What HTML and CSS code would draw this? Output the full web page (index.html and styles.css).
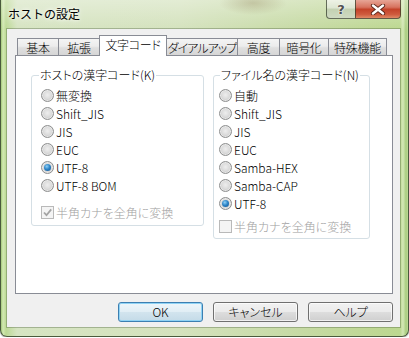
FILE: index.html
```html
<!DOCTYPE html>
<html lang="ja">
<head>
<meta charset="utf-8">
<title>ホストの設定</title>
<link rel="stylesheet" href="styles.css">
</head>
<body>
<div class="window">
  <div class="titlebar">
    <span class="title">ホストの設定</span>
    <div class="caption-btns">
      <span class="cap cap-help">?</span>
      <span class="cap cap-close">
        <svg width="16" height="11" viewBox="0 0 16 11">
          <path d="M3 1.5 L13 9.5 M13 1.5 L3 9.5" stroke="#5a2418" stroke-width="4.2" stroke-linecap="round"/>
          <path d="M3 1.5 L13 9.5 M13 1.5 L3 9.5" stroke="#ffffff" stroke-width="2.4" stroke-linecap="round"/>
        </svg>
      </span>
    </div>
  </div>
  <div class="client">
    <div class="tabs">
      <span class="tab t1">基本</span>
      <span class="tab t2">拡張</span>
      <span class="tab t3 selected">文字コード</span>
      <span class="tab t4">ダイアルアップ</span>
      <span class="tab t5">高度</span>
      <span class="tab t6">暗号化</span>
      <span class="tab t7">特殊機能</span>
    </div>
    <div class="panel">
      <div class="group group-host">
        <div class="group-title">ホストの漢字コード(K)</div>
        <div class="opts">
          <div class="opt"><span class="radio"></span>無変換</div>
          <div class="opt"><span class="radio"></span>Shift_JIS</div>
          <div class="opt"><span class="radio"></span>JIS</div>
          <div class="opt"><span class="radio"></span>EUC</div>
          <div class="opt"><span class="radio on"><span class="dot"></span></span>UTF-8</div>
          <div class="opt"><span class="radio"></span>UTF-8 BOM</div>
        </div>
        <div class="opt check disabled">
          <span class="box">
            <svg width="11" height="11" viewBox="0 0 11 11"><path d="M2 5.5 L4.5 8.2 L9.2 2.4" fill="none" stroke="#a4a4a4" stroke-width="1.8"/></svg>
          </span>半角カナを全角に変換
        </div>
      </div>
      <div class="group group-file">
        <div class="group-title">ファイル名の漢字コード(N)</div>
        <div class="opts">
          <div class="opt"><span class="radio"></span>自動</div>
          <div class="opt"><span class="radio"></span>Shift_JIS</div>
          <div class="opt"><span class="radio"></span>JIS</div>
          <div class="opt"><span class="radio"></span>EUC</div>
          <div class="opt"><span class="radio"></span>Samba-HEX</div>
          <div class="opt"><span class="radio"></span>Samba-CAP</div>
          <div class="opt"><span class="radio on"><span class="dot"></span></span>UTF-8</div>
        </div>
        <div class="opt check disabled">
          <span class="box"></span>半角カナを全角に変換
        </div>
      </div>
    </div>
    <div class="buttons">
      <span class="btn default">OK</span>
      <span class="btn">キャンセル</span>
      <span class="btn">ヘルプ</span>
    </div>
  </div>
</div>
</body>
</html>
```
FILE: styles.css
```css
html, body {
  margin: 0;
  padding: 0;
  background: #ffffff;
}

body {
  font-family: "Noto Sans CJK JP", "Noto Sans", sans-serif;
  font-size: 12px;
  font-weight: 300;
  color: #000;
}

.window {
  width: 409px;
  height: 337px;
  box-sizing: border-box;
  border: 1px solid #4a5a3c;
  border-top: none;
  border-radius: 0 0 7px 7px;
  padding: 0 8px 0 6px;
  display: flex;
  flex-direction: column;
  background:
    radial-gradient(ellipse 34px 12px at 252px 3px, rgba(150, 135, 95, 0.35), rgba(150, 135, 95, 0)),
    linear-gradient(to bottom, rgba(255, 255, 255, 0.35), rgba(255, 255, 255, 0) 30px),
    linear-gradient(to right, #a3c879 0, #d3e9b3 2px, #bcd995 5px, #d6e4c2 16px, #d4e2bd 180px, #c6daa4 300px, #bed793 380px, #bcd890 399px, #d4e8b6 402px, #a8cc7e 405px, #c9e2a4 408px);
  box-shadow: 0 1px 1px rgba(0, 0, 0, 0.35);
}

.titlebar {
  height: 29px;
  margin: 0 -8px 0 -6px;
  padding: 0 7px 0 7px;
  display: flex;
  align-items: flex-start;
  flex-shrink: 0;
}

.title {
  margin-top: 6px;
  font-size: 12px;
  font-weight: 400;
  line-height: 16px;
  color: #000;
  text-shadow: 0 0 6px rgba(255, 255, 255, 0.9), 0 0 3px rgba(255, 255, 255, 0.9);
}

.caption-btns {
  margin-left: auto;
  display: flex;
}

.cap {
  height: 19px;
  box-sizing: border-box;
  display: flex;
  align-items: center;
  justify-content: center;
  border: 1px solid rgba(55, 65, 45, 0.75);
  border-top: none;
}

.cap-help {
  width: 29px;
  border-right: none;
  border-radius: 0 0 0 4px;
  background: linear-gradient(to bottom, #eef2e6 0%, #dde6d2 45%, #c3d1b2 50%, #cfdac2 100%);
  font-family: "DejaVu Sans", sans-serif;
  font-weight: bold;
  font-size: 13px;
  color: #505050;
  text-shadow: 0 0 1px #fff, 0 0 2px #fff;
  line-height: 13px;
}

.cap-close {
  width: 46px;
  border-radius: 0 0 4px 0;
  background: linear-gradient(to bottom, #e7a596 0%, #d7735f 40%, #c4432a 52%, #cf5b3e 80%, #e08a66 100%);
}

.client {
  height: 298px;
  flex-shrink: 0;
  background: #f0f0f0;
  box-shadow: 0 0 0 1px rgba(70, 90, 55, 0.35);
  display: flex;
  flex-direction: column;
}

.tabs {
  margin: 6px 0 0 10px;
  height: 20px;
  display: flex;
  align-items: flex-end;
}

.tab {
  box-sizing: border-box;
  height: 17px;
  border: 1px solid #898c95;
  border-bottom: none;
  margin-left: -1px;
  display: flex;
  align-items: center;
  justify-content: center;
  line-height: 14px;
  padding-top: 1px;
  background: linear-gradient(to bottom, #f4f4f4 0%, #ececec 45%, #dfdfdf 55%, #d6d6d6 100%);
  font-feature-settings: "palt";
  letter-spacing: -0.3px;
  white-space: nowrap;
}

.t1 { width: 42px; margin-left: 0; }
.t2 { width: 42px; }
.t3 { width: 68px; }
.t4 { width: 72px; letter-spacing: -1px; }
.t5 { width: 43px; }
.t6 { width: 50px; }
.t7 { width: 59px; }

.tab.selected {
  height: 21px;
  margin-bottom: -1px;
  background: #ffffff;
  position: relative;
  z-index: 1;
  padding-top: 0;
  padding-bottom: 2px;
}

.panel {
  margin-left: 8px;
  width: 378px;
  height: 239px;
  box-sizing: border-box;
  border: 1px solid #898c95;
  background: #ffffff;
  display: flex;
  align-items: flex-start;
  gap: 9px;
  padding: 19px 0 0 15px;
}

.group {
  box-sizing: border-box;
  border: 1px solid #d5dfe5;
  border-radius: 3px;
  flex-shrink: 0;
}

.group-host {
  width: 173px;
  height: 151px;
  padding-left: 9px;
}

.group-file {
  width: 157px;
  height: 164px;
  padding-left: 5px;
}

.group-title {
  width: fit-content;
  height: 14px;
  line-height: 14px;
  margin-top: -8px;
  padding: 0 1px;
  background: #ffffff;
  white-space: nowrap;
  font-feature-settings: "palt";
}

.group-host .group-title { margin-left: -2px; }
.group-file .group-title { margin-left: 1px; }

.opts {
  margin-top: 4px;
  display: flex;
  flex-direction: column;
}

.opt {
  height: 18px;
  display: flex;
  align-items: center;
  white-space: nowrap;
  font-feature-settings: "palt";
}

.radio {
  width: 13px;
  height: 13px;
  box-sizing: border-box;
  border-radius: 50%;
  border: 1px solid #8e8f8f;
  background: radial-gradient(circle at 50% 45%, #eeeeee 0%, #dcdcdc 45%, #c4c4c4 80%, #d8d8d8 100%);
  box-shadow: inset 0 0 0 1px rgba(255, 255, 255, 0.5);
  margin-right: 2px;
  flex-shrink: 0;
  display: flex;
  align-items: center;
  justify-content: center;
}

.radio .dot {
  width: 7px;
  height: 7px;
  border-radius: 50%;
  background: radial-gradient(circle at 40% 35%, #8fd0f6 0%, #2f86c8 45%, #0d4f8e 100%);
}

.check {
  margin-top: 9px;
}

.group-file .check {
  margin-top: 5px;
}

.disabled {
  color: #a0a0a0;
}

.box {
  width: 13px;
  height: 13px;
  box-sizing: border-box;
  border: 1px solid #b9b9b9;
  background: #f4f4f4;
  margin-right: 2px;
  flex-shrink: 0;
  display: flex;
  align-items: center;
  justify-content: center;
}

.buttons {
  margin-top: 8px;
  height: 20px;
  display: flex;
  justify-content: flex-end;
  gap: 10px;
  padding-right: 7px;
}

.btn {
  width: 85px;
  height: 20px;
  box-sizing: border-box;
  border: 1px solid #707070;
  border-radius: 3px;
  background: linear-gradient(to bottom, #f2f2f2 0%, #ebebeb 48%, #dddddd 52%, #cfcfcf 100%);
  box-shadow: inset 0 0 0 1px rgba(255, 255, 255, 0.7);
  display: flex;
  align-items: center;
  justify-content: center;
  line-height: 14px;
  font-feature-settings: "palt";
  padding-bottom: 1px;
}

.btn.default {
  border-color: #3c7fb1;
  background: linear-gradient(to bottom, #eef6fa 0%, #e1eef5 48%, #d2e4ee 52%, #c4dbe8 100%);
  box-shadow: inset 0 0 0 1px #8fd3f5;
}
```
